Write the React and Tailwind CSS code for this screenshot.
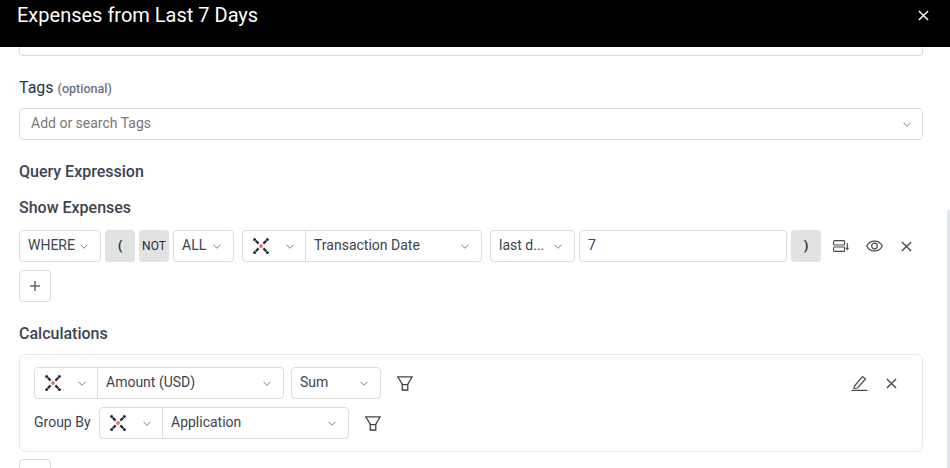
import React from "react";

const Chevron = ({ className = "" }) => (
  <svg width="8" height="5" viewBox="0 0 8 5" fill="none" stroke="#808080" strokeWidth="1" className={"shrink-0 " + className}>
    <path d="M0.5 0.7 L4 4.3 L7.5 0.7" />
  </svg>
);

const Close = ({ size = 11, color = "#4a4a4a", width = 1.5 }) => (
  <svg width={size} height={size} viewBox="0 0 12 12" fill="none" stroke={color} strokeWidth={width} className="shrink-0">
    <path d="M1 1 L11 11 M11 1 L1 11" />
  </svg>
);

const Funnel = () => (
  <svg width="16" height="15" viewBox="0 0 16 15" fill="none" stroke="#444" strokeWidth="1.3" className="shrink-0">
    <path d="M0.8 0.8 H15.2 L10.8 8.2 V14 H5.2 V8.2 Z M5.2 8.6 H10.8" />
  </svg>
);

const Logo = () => (
  <svg width="16" height="16" viewBox="0 0 16 16" className="shrink-0">
    <g stroke="#262c38" strokeWidth="2.3">
      <path d="M2.8 2.8 L5.6 5.6 M13.2 2.8 L10.4 5.6 M2.8 13.2 L5.6 10.4 M13.2 13.2 L10.4 10.4" />
    </g>
    <circle cx="1.6" cy="1.6" r="1.5" fill="#262c38" />
    <circle cx="14.4" cy="1.6" r="1.5" fill="#262c38" />
    <circle cx="1.6" cy="14.4" r="1.5" fill="#262c38" />
    <circle cx="14.4" cy="14.4" r="1.5" fill="#262c38" />
    <circle cx="8" cy="8" r="1.9" fill="#f0704f" />
  </svg>
);

const Box = "h-8 rounded-[4px] border border-[#dcdcdc] bg-white flex items-center text-[14px] text-[#3c4450] shrink-0";

const Select = ({ text, w, pad = "pl-2 pr-[11px]" }) => (
  <div className={`${Box} ${w} ${pad} justify-between`}>
    <span className="pb-[2px]">{text}</span>
    <Chevron />
  </div>
);

const Combo = ({ w, text }) => (
  <div className={`${Box} ${w}`}>
    <div className="w-[63px] h-full flex items-center border-r border-[#dcdcdc] pl-[10px] gap-[17px]">
      <Logo />
      <Chevron />
    </div>
    <div className="flex-1 flex items-center justify-between pl-2 pr-[12px]">
      <span className="pb-[2px]">{text}</span>
      <Chevron />
    </div>
  </div>
);

const Gray = ({ children, small }) => (
  <div className={`h-8 w-[30px] rounded-[4px] bg-[#e2e2e2] flex items-center justify-center text-[#1f2937] shrink-0 pb-[1px] ${small ? "text-[12px]" : "text-[12px] font-bold"}`}>
    {children}
  </div>
);

export default function App() {
  return (
    <div className="relative w-[950px] h-[468px] overflow-hidden bg-white flex flex-col font-['Roboto',sans-serif]">
      <header className="h-[47px] shrink-0 bg-black text-white flex items-start justify-between pl-[17px] pr-[21px]">
        <h1 className="text-[20px] leading-[30px] font-normal">Expenses from Last 7 Days</h1>
        <div className="mt-[10px]">
          <Close size={11} color="#fff" width={1.5} />
        </div>
      </header>

      <main className="flex-1 min-h-0 overflow-hidden pl-[19px] pr-[27px]">
        <div className="h-[9px] rounded-b-[4px] border border-t-0 border-[#dcdcdc]" />

        <div className="mt-[22px] h-[20px] flex items-baseline gap-[4px] leading-[20px]">
          <span className="text-[16px] text-[#2b3440]">Tags</span>
          <span className="text-[12.5px] font-medium text-[#6b7280]">(optional)</span>
        </div>
        <div className="mt-[10px] h-8 rounded-[4px] border border-[#dcdcdc] flex items-center justify-between pl-[11px] pr-[11px] text-[14px] text-[#777]">
          <span className="pb-[2px]">Add or search Tags</span>
          <Chevron />
        </div>

        <div className="mt-[22px] h-5 text-[16px] font-medium leading-5 text-[#3c4450]">Query Expression</div>
        <div className="mt-[16px] h-5 text-[16px] font-medium leading-5 text-[#3c4450]">Show Expenses</div>

        <div className="mt-[12px] flex items-center">
          <Select text="WHERE" w="w-[82px]" pad="pl-2 pr-[12px]" />
          <div className="ml-1"><Gray>(</Gray></div>
          <div className="ml-1"><Gray small>NOT</Gray></div>
          <div className="ml-1"><Select text="ALL" w="w-[61px]" pad="pl-2 pr-[12px]" /></div>
          <div className="ml-2"><Combo w="w-[240px]" text="Transaction Date" /></div>
          <div className="ml-2"><Select text="last d..." w="w-[85px]" pad="pl-2 pr-[12px]" /></div>
          <div className={`${Box} ml-1 w-[208px] pl-2`}><span className="pb-[2px]">7</span></div>
          <div className="ml-1"><Gray>)</Gray></div>
          <svg width="16" height="12" viewBox="0 0 16 12" fill="none" stroke="#4a4a4a" strokeWidth="1.1" className="ml-[12px] shrink-0">
            <rect x="0.6" y="0.6" width="11" height="4.4" rx="1" />
            <rect x="0.6" y="7" width="11" height="4.4" rx="1" />
            <path d="M14.3 3 V9 M13 7.8 L14.3 9.3 L15.6 7.8" />
          </svg>
          <svg width="17" height="12" viewBox="0 0 17 12" fill="none" stroke="#4a4a4a" strokeWidth="1.2" className="ml-[17px] shrink-0">
            <path d="M0.7 6 C4 -0.5 13 -0.5 16.3 6 C13 12.5 4 12.5 0.7 6 Z" />
            <circle cx="8.5" cy="6" r="2.8" />
          </svg>
          <div className="ml-[18px]"><Close /></div>
        </div>

        <div className="mt-2 h-8 w-8 rounded-[4px] border border-[#dcdcdc] flex items-center justify-center">
          <svg width="10" height="10" viewBox="0 0 10 10" stroke="#666" strokeWidth="1.5"><path d="M5 0 V10 M0 5 H10" /></svg>
        </div>

        <div className="mt-[22px] h-5 text-[16px] font-medium leading-5 text-[#3c4450]">Calculations</div>

        <section className="mt-[10px] h-[98px] rounded-[6px] border border-[#e8e8e8] pl-[14px] pr-[25px] pt-3">
          <div className="flex items-center">
            <Combo w="w-[250px]" text="Amount (USD)" />
            <div className="ml-[7px]"><Select text="Sum" w="w-[90px]" pad="pl-2 pr-[12px]" /></div>
            <div className="ml-[16px]"><Funnel /></div>
            <svg width="17" height="16" viewBox="0 0 17 16" fill="none" stroke="#4a4a4a" strokeWidth="1.2" className="ml-auto shrink-0">
              <path d="M3.5 11 L11.5 1.5 L14.5 4 L6.5 13 L3 13.4 Z" />
              <path d="M0.5 15.4 H16.5" strokeWidth="1.3" />
            </svg>
            <div className="ml-[18px]"><Close /></div>
          </div>
          <div className="mt-2 flex items-center">
            <span className="w-[65px] shrink-0 text-[14px] text-[#3c4450] pb-[2px]">Group By</span>
            <Combo w="w-[250px]" text="Application" />
            <div className="ml-[16px]"><Funnel /></div>
          </div>
        </section>

        <div className="mt-[7px] h-8 w-8 rounded-[4px] border border-[#dcdcdc]" />
      </main>

      <div className="absolute right-0 top-[210px] bottom-0 w-[3px] bg-[#e3e6f2]" />
    </div>
  );
}
